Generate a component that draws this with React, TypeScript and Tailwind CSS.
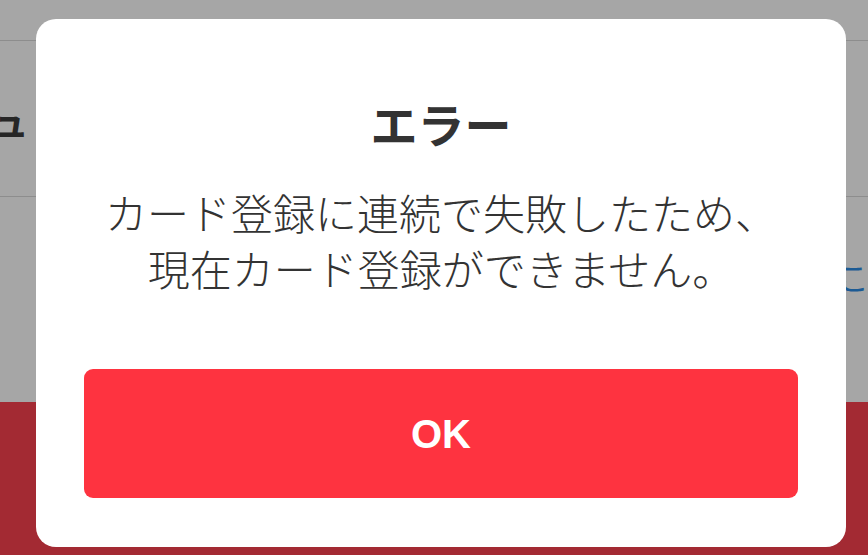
import React from "react";

const jp = { fontFamily: '"Noto Sans CJK JP", "Noto Sans", sans-serif' };

export default function App() {
  return (
    <div className="relative w-[868px] h-[555px] overflow-hidden bg-[#a6a6a6]" style={jp}>
      {/* underlying page (dimmed) */}
      <div className="flex flex-col h-full">
        <div className="h-[41px] border-b border-[#8d8d8d]" />
        <div className="h-[156px] border-b border-[#8d8d8d] flex items-center pt-[2px]">
          <span className="-ml-[9px] text-[38px] font-bold text-[#262626] leading-none">ュ</span>
        </div>
        <div className="flex-1 flex items-start justify-end pt-[63px]">
          <span className="-mr-[1px] w-[32px] text-[32px] leading-none text-[#1b5a94] whitespace-nowrap">こ</span>
        </div>
        <div className="h-[153px] bg-[#a32a33]" />
      </div>

      {/* dialog */}
      <div className="absolute left-[36px] top-[19px] w-[810px] h-[528px] bg-white rounded-[20px] px-[48px] pt-[76px] pb-[49px] flex flex-col">
        <div className="text-center text-[47px] leading-[56px] font-bold text-[#333333]">エラー</div>
        <div className="mt-[33px] text-center text-[42px] leading-[56px] font-light text-[#333333]">
          <div>カード登録に連続で失敗したため、</div>
          <div>現在カード登録ができません。</div>
        </div>
        <button className="mt-[73px] h-[129px] w-full rounded-[9px] bg-[#fe3340] text-white text-[40px] font-bold flex items-center justify-center" style={{ fontFamily: '"Liberation Sans", Arial, sans-serif' }}>
          OK
        </button>
      </div>
    </div>
  );
}
